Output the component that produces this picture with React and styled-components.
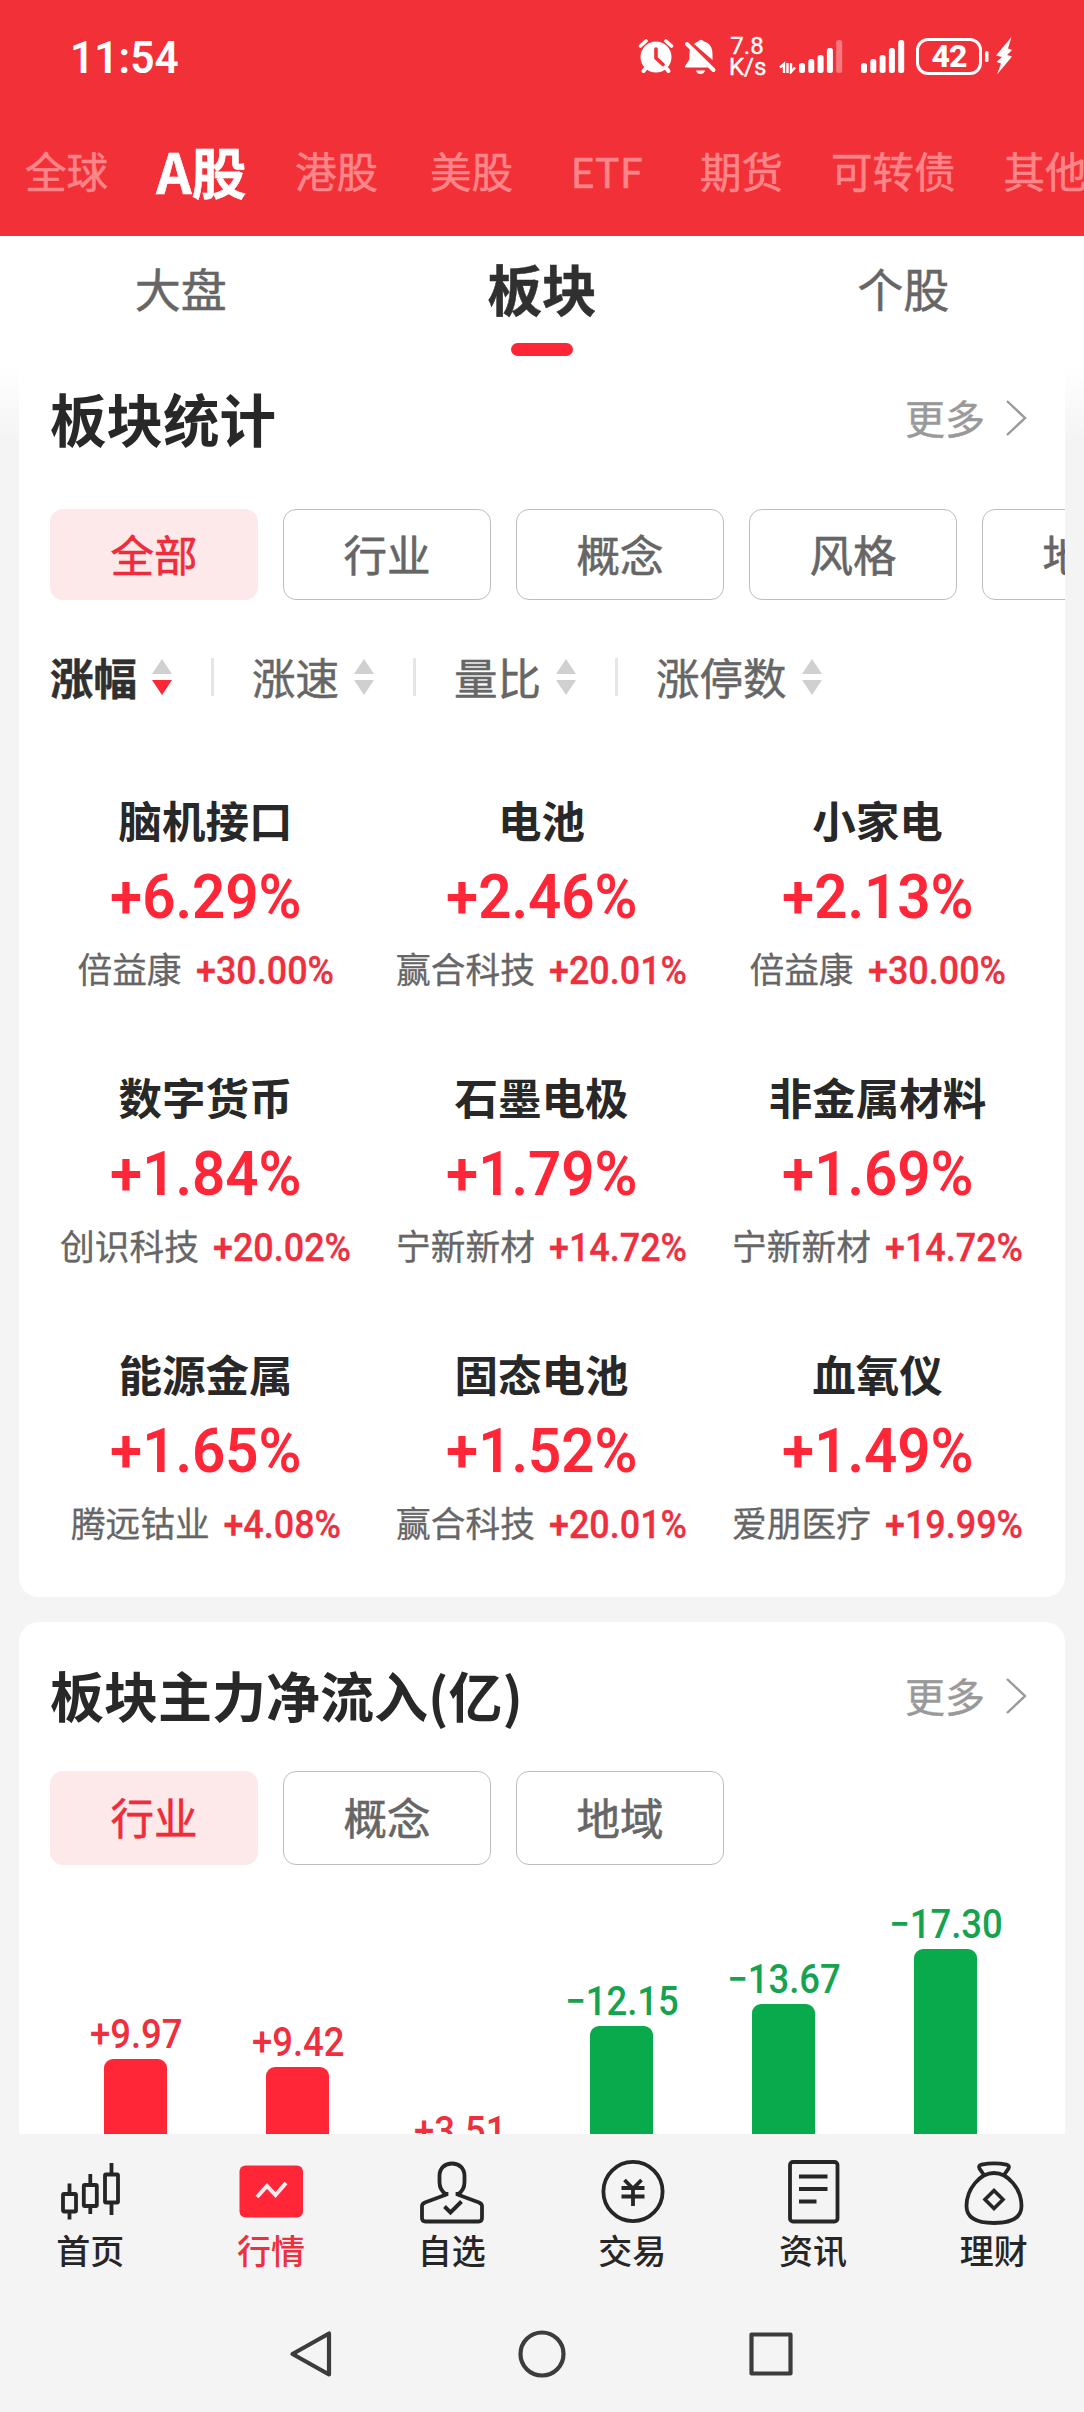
import React from 'react'
import styled, {createGlobalStyle} from 'styled-components';

const GlobalStyle = createGlobalStyle`
  * {
    box-sizing: border-box;
  }
  body {
    margin: 0;
    background-color: #f4f4f4;
    font-family: "Noto Sans CJK SC", "Noto Sans", sans-serif;
    color: #282828;
  }
`
const Page = styled.div`
  width: 1084px;
  height: 2412px;
  display: flex;
  flex-direction: column;
  overflow: hidden;
  background-color: #f4f4f4;
`
const Header = styled.header`
  height: 236px;
  flex: none;
  background-color: #f13038;
  color: white;
`
const StatusBar = styled.div`
  height: 110px;
  padding: 0 68px 0 70px;
  display: flex;
  justify-content: space-between;
  align-items: center;
`
const Clock = styled.div`
  font-family: Roboto, sans-serif;
  font-size: 45px;
  font-weight: 600;
  line-height: 50px;
  padding-top: 6px;
  transform: scaleX(0.945);
  transform-origin: left;
`
const StatusIcons = styled.div`
  display: flex;
  align-items: center;
  height: 44px;
  margin-top: 2px;
`
const Speed = styled.div`
  width: 36px;
  margin: 0 14px 0 12px;
  padding-top: 2px;
  font-family: Roboto, sans-serif;
  font-size: 24px;
  line-height: 21px;
  text-align: center;
  white-space: nowrap;
  -webkit-text-stroke: 0.4px;
`
const Battery = styled.div`
  width: 66px;
  height: 37px;
  margin-left: 11px;
  border: 3px solid white;
  border-radius: 12px;
  font-family: Roboto, sans-serif;
  font-size: 32px;
  font-weight: 800;
  line-height: 31px;
  text-align: center;
  letter-spacing: -1px;
`
const Markets = styled.nav`
  height: 126px;
  display: flex;
  overflow: hidden;
`
const Market = styled.div`
  flex: none;
  min-width: 135px;
  padding: 0 23px 0 21px;
  line-height: 121px;
  text-align: center;
  white-space: nowrap;
  font-size: ${props => props.$active ? '55px' : '41.5px'};
  font-weight: ${props => props.$active ? 700 : 400};
  color: ${props => props.$active ? 'white' : '#ff8588'};
  -webkit-text-stroke: 0.6px;
`
const SubTabs = styled.div`
  height: 130px;
  flex: none;
  display: flex;
  background-color: white;
`
const SubTab = styled.div`
  flex: 1;
  display: flex;
  flex-direction: column;
  align-items: center;
  font-size: ${props => props.$active ? '54.5px' : '46px'};
  font-weight: ${props => props.$active ? 700 : 400};
  line-height: 103px;
  color: ${props => props.$active ? '#303030' : '#666'};
  -webkit-text-stroke: 0.5px;
`
const Indicator = styled.div`
  width: 62px;
  height: 13px;
  margin-top: 4px;
  border-radius: 7px;
  background-color: #ff2638;
`
const Content = styled.main`
  flex: 1;
  min-height: 0;
  overflow: hidden;
  display: flex;
  flex-direction: column;
  gap: 25px;
  padding: 0 19px;
  background: linear-gradient(#fff, #f4f4f4 75px);
`
const Card = styled.section`
  flex: none;
  height: ${props => props.$height};
  overflow: hidden;
  background-color: white;
  border-radius: ${props => props.$radius};
`
const CardHead = styled.div`
  height: ${props => props.$height};
  padding: ${props => props.$top} 38px 0 31px;
  display: flex;
  justify-content: space-between;
`
const Title = styled.h2`
  margin: 0;
  font-size: ${props => props.$size};
  font-weight: 700;
  line-height: 78px;
`
const More = styled.div`
  display: flex;
  align-items: center;
  gap: 20px;
  height: 79px;
  font-size: 40px;
  line-height: 79px;
  color: #999;
  -webkit-text-stroke: 0.4px;
`
const Chips = styled.div`
  display: flex;
  gap: 25px;
  padding-left: 31px;
`
const Chip = styled.div`
  flex: none;
  width: 208px;
  height: ${props => props.$height};
  display: flex;
  align-items: center;
  justify-content: center;
  padding-bottom: 3px;
  border: ${props => props.$active ? 'none' : '1px solid #bdbdbd'};
  border-radius: 13px;
  background-color: ${props => props.$active ? '#fee9ea' : 'white'};
  color: ${props => props.$active ? '#f02c3b' : '#666'};
  font-size: 43.5px;
  -webkit-text-stroke: 0.6px;
`
const Sorts = styled.div`
  display: flex;
  align-items: center;
  height: 60px;
  margin-top: 47px;
  padding-left: 31px;
`
const Sort = styled.div`
  display: flex;
  align-items: center;
  gap: 15px;
  font-size: 43.5px;
  line-height: 60px;
  font-weight: ${props => props.$active ? 700 : 400};
  color: ${props => props.$active ? '#303030' : '#666'};
  -webkit-text-stroke: 0.5px;

  &:not(:first-child) {
    margin-left: 39px;
  }
  &:not(:first-child)::before {
    content: '';
    width: 3px;
    height: 38px;
    margin-right: 23px;
    background-color: #e6e6e6;
  }
`
const Sectors = styled.div`
  display: grid;
  grid-template-columns: repeat(3, 336px);
  grid-auto-rows: 277px;
  justify-content: center;
  margin-top: 80px;
`
const Sector = styled.div`
  display: flex;
  flex-direction: column;
  align-items: center;
  white-space: nowrap;
`
const SectorName = styled.div`
  padding-right: 1px;
  font-size: 43.5px;
  font-weight: 700;
  line-height: 66px;
`
const Percent = styled.div`
  padding-top: 3px;
  font-family: Roboto, sans-serif;
  font-size: 62px;
  font-weight: 600;
  line-height: 82px;
  color: #ff2638;
  transform: scaleX(0.94);
`
const Leader = styled.div`
  display: flex;
  gap: 10px;
  padding-left: 3px;
  font-size: 34.7px;
  line-height: 60px;
  color: #666;
  -webkit-text-stroke: 0.3px;
`
const LeaderPercent = styled.span`
  padding-top: 3px;
  font-family: Roboto, sans-serif;
  font-size: 38px;
  font-weight: 500;
  color: #ef2f3e;
  transform: scaleX(0.945);
`
const Chart = styled.div`
  display: grid;
  grid-template-columns: repeat(6, 162px);
  align-items: end;
  height: 500px;
  padding-left: 35px;
`
const Column = styled.div`
  display: flex;
  flex-direction: column;
  align-items: center;
  color: ${props => props.$down ? '#16a350' : '#ef2f3e'};
`
const Value = styled.div`
  padding-left: 2px;
  font-family: Roboto, sans-serif;
  font-size: 40.5px;
  font-weight: 500;
  line-height: 49px;
  transform: scaleX(0.9);
`
const Bar = styled.div`
  width: 63px;
  border-radius: 9px 9px 0 0;
  background-color: ${props => props.$down ? '#09aa4c' : '#ff2638'};
`
const TabBar = styled.nav`
  flex: none;
  height: 166px;
  display: grid;
  grid-template-columns: repeat(6, 1fr);
  padding-top: 22px;
`
const TabItem = styled.div`
  display: flex;
  flex-direction: column;
  align-items: center;
  font-size: 34px;
  font-weight: 500;
  line-height: 44px;
  color: ${props => props.$active ? '#ef2f3e' : '#262626'};
`
const TabIcon = styled.svg`
  width: 72px;
  height: 72px;
  fill: none;
  stroke: #262626;
  stroke-width: 3.8;
`
const SystemBar = styled.div`
  flex: none;
  height: 112px;
  display: flex;
  justify-content: center;
  gap: 181px;
  padding-top: 29px;
`
const SystemIcon = styled.svg`
  width: 48px;
  height: 50px;
  fill: none;
  stroke: #3c3c3c;
  stroke-width: 4.2;
  stroke-linejoin: round;
`

const markets = ['全球', 'A股', '港股', '美股', 'ETF', '期货', '可转债', '其他'];
const sectors = [
    {name: '脑机接口', change: '+6.29%', leader: '倍益康', leaderChange: '+30.00%'},
    {name: '电池', change: '+2.46%', leader: '赢合科技', leaderChange: '+20.01%'},
    {name: '小家电', change: '+2.13%', leader: '倍益康', leaderChange: '+30.00%'},
    {name: '数字货币', change: '+1.84%', leader: '创识科技', leaderChange: '+20.02%'},
    {name: '石墨电极', change: '+1.79%', leader: '宁新新材', leaderChange: '+14.72%'},
    {name: '非金属材料', change: '+1.69%', leader: '宁新新材', leaderChange: '+14.72%'},
    {name: '能源金属', change: '+1.65%', leader: '腾远钴业', leaderChange: '+4.08%'},
    {name: '固态电池', change: '+1.52%', leader: '赢合科技', leaderChange: '+20.01%'},
    {name: '血氧仪', change: '+1.49%', leader: '爱朋医疗', leaderChange: '+19.99%'},
];
const flows = [
    {value: '+9.97', height: 306},
    {value: '+9.42', height: 298},
    {value: '+3.51', height: 209},
    {value: '−12.15', height: 339, down: true},
    {value: '−13.67', height: 361, down: true},
    {value: '−17.30', height: 416, down: true},
];

const Signal = ({faded}) => (
    <svg width="44" height="36" viewBox="0 0 44 36" fill="white">
        {[25, 21, 17, 10, 2].map((top, i) => (
            <rect key={top} x={i * 9.3} y={top} width="6" height={35 - top} rx="2.5"
                  opacity={faded && i === 4 ? 0.35 : 1}/>
        ))}
    </svg>
)

const Chevron = () => (
    <svg width="22" height="36" viewBox="0 0 22 36" fill="none" stroke="#999" strokeWidth="2.4">
        <path d="M2 1L20 18L2 35"/>
    </svg>
)

const Arrows = ({active}) => (
    <svg width="20" height="36" viewBox="0 0 20 36">
        <path d="M10 0L20 15H0Z" fill="#d0d0d0"/>
        <path d="M0 21H20L10 36Z" fill={active ? '#ff2638' : '#d0d0d0'}/>
    </svg>
)

const tabs = [
    {
        label: '首页',
        icon: <>
            <rect x="9" y="38" width="13" height="17.5" rx="1"/>
            <rect x="29.8" y="29" width="13" height="21" rx="1"/>
            <rect x="51" y="18.5" width="13" height="28" rx="1"/>
            <path d="M15.5 27.5V38M15.5 55.5V63.5M36.3 18V29M36.3 50V58M57.5 7V18.5M57.5 46.5V59"/>
        </>
    },
    {
        label: '行情',
        active: true,
        icon: <>
            <rect x="4.5" y="9.5" width="63.5" height="52" rx="6" fill="#ff2638" stroke="none"/>
            <path d="M22 41L32 30L40.5 39L51 27" stroke="#ffecee" strokeWidth="4"/>
        </>
    },
    {
        label: '自选',
        icon: <>
            <path d="M30.5 38.5C26 36 23.5 32 23.5 26V20C23.5 12 29 7.5 36 7.5S48.5 12 48.5 20V26C48.5 32 46 36 41.5 38.5"/>
            <path d="M30.5 36V38.5L9 46.5Q6 48 6 50V62Q6 65.5 9.5 65.5H62.5Q66 65.5 66 62V50Q66 48 63 46.5L41.5 38.5V36"/>
            <path d="M28.5 50.5L34.5 56.5L45.5 45.5" strokeWidth="4"/>
        </>
    },
    {
        label: '交易',
        icon: <>
            <circle cx="37" cy="35.5" r="29.6"/>
            <path d="M28.5 24L37 32.5L45.5 24M37 32V50M25.5 32H48.5M25.5 40.5H48.5"/>
        </>
    },
    {
        label: '资讯',
        icon: <>
            <rect x="13" y="6" width="47.5" height="59.5" rx="3"/>
            <path d="M22 20.5H50.5M22 33H50.5M22 45.5H39.5"/>
        </>
    },
    {
        label: '理财',
        icon: <>
            <path d="M26 19L21.5 12.5Q20 9.5 23.5 8.7Q36 6 48.5 8.7Q52 9.5 50.5 12.5L46 19"/>
            <path d="M36 17C50 17 63.5 33 63.5 50C63.5 63 51 67 36 67S8.5 63 8.5 50C8.5 33 22 17 36 17Z"/>
            <path d="M36 34.5L45 43.5L36 52.5L27 43.5Z" strokeWidth="3.6"/>
        </>
    },
];

const App = () => {
    return (
        <Page>
            <GlobalStyle/>
            <Header>
                <StatusBar>
                    <Clock>11:54</Clock>
                    <StatusIcons>
                        <svg width="38" height="38" viewBox="0 0 38 38" fill="white" stroke="white" strokeLinecap="round">
                            <circle cx="18" cy="20" r="15.5" stroke="none"/>
                            <path d="M2.5 9L8 4M28 4L33.5 9" strokeWidth="3.6"/>
                            <path d="M8 31L5.5 34M28 31L30.5 34" strokeWidth="4"/>
                            <path d="M18 12V21L25 27.5" fill="none" stroke="#f13038" strokeWidth="3.6"/>
                        </svg>
                        <svg width="41" height="38" viewBox="-9 0 41 38" fill="white">
                            <path d="M5 11C4.5 14 4.5 17 4.5 20C4.5 25 0 27 0 30.5H23Z"/>
                            <path d="M9 7Q11 5 13 4.5Q16 1 19 4.5C25 6 27.5 11 27.5 17V23Z"/>
                            <path d="M2 7L28.5 33" stroke="white" strokeWidth="4" strokeLinecap="round"/>
                            <path d="M11 33.5H20Q19 37 15.5 37T11 33.5Z"/>
                        </svg>
                        <Speed>
                            <div>7.8</div>
                            <div>K/s</div>
                        </Speed>
                        <svg width="20" height="36" viewBox="0 0 20 36" fill="none" stroke="white" strokeWidth="2.4">
                            <path d="M1 29.5L5 26V35M8.5 25V35M12 25V34L16 29.500"/>
                        </svg>
                        <Signal faded/>
                        <svg width="18" height="36"/>
                        <Signal/>
                        <Battery>42</Battery>
                        <svg width="34" height="38" viewBox="0 0 34 38" fill="white">
                            <rect x="3" y="14" width="3.5" height="11" rx="1.5"/>
                            <path d="M29.5 0L14 18.5L20 20L14.5 25L19 26.5L15 37.5L30 19.5L25 18L30 13L26 11.5Z"/>
                        </svg>
                    </StatusIcons>
                </StatusBar>
                <Markets>
                    {markets.map(item => (
                        <Market key={item} $active={item === 'A股'}>{item}</Market>
                    ))}
                </Markets>
            </Header>
            <SubTabs>
                <SubTab>大盘</SubTab>
                <SubTab $active>板块<Indicator/></SubTab>
                <SubTab>个股</SubTab>
            </SubTabs>
            <Content>
                <Card $height="1231px" $radius="0 0 20px 20px">
                    <CardHead $height="143px" $top="12px">
                        <Title $size="56.5px">板块统计</Title>
                        <More>更多<Chevron/></More>
                    </CardHead>
                    <Chips>
                        {['全部', '行业', '概念', '风格', '地域'].map(item => (
                            <Chip key={item} $height="91px" $active={item === '全部'}>{item}</Chip>
                        ))}
                    </Chips>
                    <Sorts>
                        {['涨幅', '涨速', '量比', '涨停数'].map(item => (
                            <Sort key={item} $active={item === '涨幅'}>
                                {item}<Arrows active={item === '涨幅'}/>
                            </Sort>
                        ))}
                    </Sorts>
                    <Sectors>
                        {sectors.map(item => (
                            <Sector key={item.name}>
                                <SectorName>{item.name}</SectorName>
                                <Percent>{item.change}</Percent>
                                <Leader>
                                    {item.leader}
                                    <LeaderPercent>{item.leaderChange}</LeaderPercent>
                                </Leader>
                            </Sector>
                        ))}
                    </Sectors>
                </Card>
                <Card $height="743px" $radius="20px 20px 0 0">
                    <CardHead $height="149px" $top="34px">
                        <Title $size="54px">板块主力净流入(亿)</Title>
                        <More>更多<Chevron/></More>
                    </CardHead>
                    <Chips>
                        {['行业', '概念', '地域'].map(item => (
                            <Chip key={item} $height="94px" $active={item === '行业'}>{item}</Chip>
                        ))}
                    </Chips>
                    <Chart>
                        {flows.map(item => (
                            <Column key={item.value} $down={item.down}>
                                <Value>{item.value}</Value>
                                <Bar $down={item.down} style={{height: item.height}}/>
                            </Column>
                        ))}
                    </Chart>
                </Card>
            </Content>
            <TabBar>
                {tabs.map(item => (
                    <TabItem key={item.label} $active={item.active}>
                        <TabIcon viewBox="0 0 72 72">{item.icon}</TabIcon>
                        {item.label}
                    </TabItem>
                ))}
            </TabBar>
            <SystemBar>
                <SystemIcon viewBox="0 0 48 50"><path d="M40 4.5V45.5L3.5 25Z"/></SystemIcon>
                <SystemIcon viewBox="0 0 48 50"><circle cx="24" cy="25" r="21.5"/></SystemIcon>
                <SystemIcon viewBox="0 0 48 50"><rect x="4.5" y="5.5" width="39" height="39"/></SystemIcon>
            </SystemBar>
        </Page>
    )
}

export default App
